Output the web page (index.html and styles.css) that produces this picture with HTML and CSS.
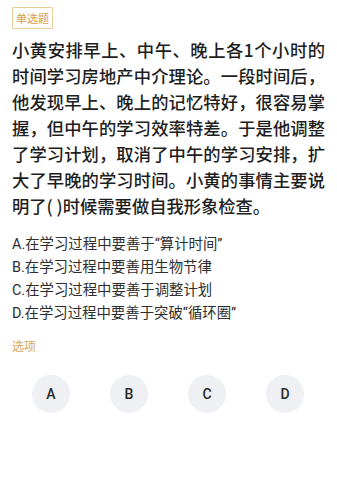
FILE: index.html
```html
<!DOCTYPE html>
<html lang="zh-CN">
<head>
<meta charset="utf-8">
<link rel="stylesheet" href="styles.css">
</head>
<body>
<div class="page">
  <div class="badge">单选题</div>
  <div class="question">小黄安排早上、中午、晚上各1个小时的时间学习房地产中介理论。一段时间后，他发现早上、晚上的记忆特好，很容易掌握，但中午的学习效率特差。于是他调整了学习计划，取消了中午的学习安排，扩大了早晚的学习时间。小黄的事情主要说明了( )时候需要做自我形象检查。</div>
  <div class="options">
    <div class="option">A.在学习过程中要善于“算计时间”</div>
    <div class="option">B.在学习过程中要善用生物节律</div>
    <div class="option">C.在学习过程中要善于调整计划</div>
    <div class="option">D.在学习过程中要善于突破“循环圈”</div>
  </div>
  <div class="label">选项</div>
  <div class="choices">
    <div class="choice"><span class="circle">A</span></div>
    <div class="choice"><span class="circle">B</span></div>
    <div class="choice"><span class="circle">C</span></div>
    <div class="choice"><span class="circle">D</span></div>
  </div>
</div>
</body>
</html>
```
FILE: styles.css
```css
html, body {
  margin: 0;
  padding: 0;
  background: #ffffff;
}
body {
  font-family: "Noto Sans CJK SC", "Noto Sans", sans-serif;
  color: #222;
}
.page {
  padding: 4px 12px 0 12px;
  width: 313px;
}
.badge {
  display: inline-block;
  border: 1px solid #e8cc95;
  color: #d39b45;
  font-size: 11px;
  line-height: 20px;
  padding: 0 3px;
  border-radius: 1px;
}
.question {
  margin-top: 8px;
  font-size: 17.3px;
  line-height: 26px;
  font-weight: 500;
  color: #1e1e1e;
  text-align: justify;
}
.options {
  margin-top: 14px;
  font-family: "Roboto", "Noto Sans CJK SC", sans-serif;
  font-size: 14.4px;
  line-height: 23px;
  color: #2e2e2e;
}
.option {
  white-space: nowrap;
}
.label {
  margin-top: 12px;
  font-size: 12px;
  line-height: 17px;
  color: #d6a659;
}
.choices {
  margin-top: 21px;
  display: grid;
  grid-template-columns: repeat(4, 78px);
}
.choice {
  display: flex;
  justify-content: center;
}
.circle {
  width: 38px;
  height: 38px;
  border-radius: 50%;
  background: #eef0f3;
  display: flex;
  align-items: center;
  justify-content: center;
  font-family: "Roboto", "Noto Sans", sans-serif;
  font-size: 14px;
  font-weight: 500;
  color: #2a2a2a;
}
```
